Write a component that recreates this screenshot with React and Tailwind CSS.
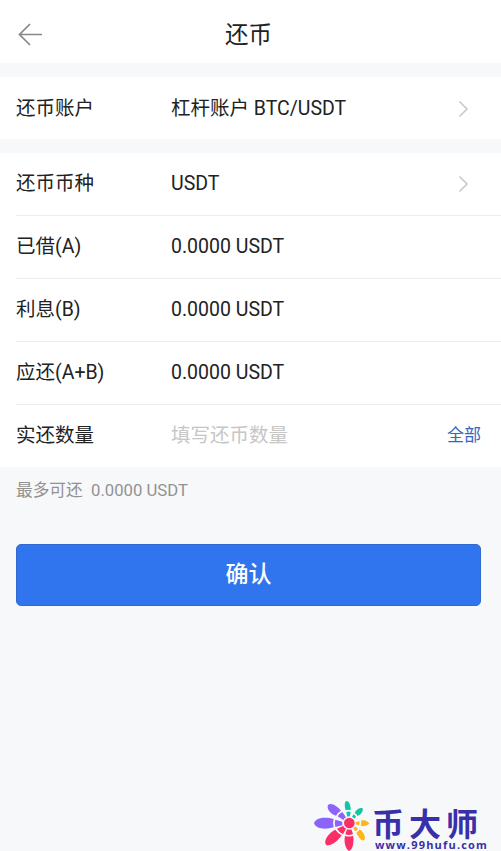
import React, { useState } from 'react';

const rows = [
  { label: '还币币种', value: 'USDT', arrow: true },
  { label: '已借(A)', value: '0.0000 USDT' },
  { label: '利息(B)', value: '0.0000 USDT' },
  { label: '应还(A+B)', value: '0.0000 USDT' },
];

const Chevron = () => (
  <svg className="ml-auto mr-8 h-[18px] w-[11px]" viewBox="0 0 11 18" fill="none" stroke="#c8c8c8" strokeWidth="1.6">
    <path d="M1.5 1.5 L9 9 L1.5 16.5" />
  </svg>
);

const Row = ({ label, value, arrow }) => (
  <div className="flex h-[63px] items-center border-b border-[#ececee]">
    <span className="w-[155px] shrink-0">{label}</span>
    <span>{value}</span>
    {arrow && <Chevron />}
  </div>
);

const Watermark = () => (
  <div className="absolute bottom-0 left-[310px] flex h-14 w-[191px] text-[#3730a8]">
    <svg className="h-14 w-[65px] shrink-0" viewBox="0 0 195 168">
      {/* outer petals */}
      <g fill="#8b65fa">
        <path d="M12 85 C18 66 48 66 71 72 Q67 85 71 97 C48 104 18 103 12 85 Z" />
        <path d="M54 30 C64 21 84 36 93 47 Q82 53 78 62 C65 59 48 43 54 30 Z" />
      </g>
      <g fill="#fb2e68">
        <path d="M76 104 Q84 116 95 121 C84 138 61 157 48 149 C39 136 57 113 76 104 Z" />
        <path d="M105 123 Q118 127 129 122 C133 139 129 164 117 168 C106 161 101 140 105 123 Z" />
      </g>
      <g fill="#0fc7a6">
        <path d="M106 20 C114 12 123 28 122 46 Q115 43 107 46 C104 36 103 26 106 20 Z" />
        <path d="M158 40 C161 51 150 61 142 63 Q140 56 134 54 C138 44 150 36 158 40 Z" />
      </g>
      <g fill="#fdb71a">
        <path d="M153 77 C164 74 174 79 178 86 C171 92 161 95 152 92 Q155 85 153 77 Z" />
        <path d="M149 103 C160 111 169 126 163 136 C153 139 144 123 139 113 Q146 110 149 103 Z" />
      </g>
      {/* inner petals */}
      <path d="M76 74 L97 80 L97 91 L76 96 Q72 85 76 74 Z M83 64 Q88 55 97 51 L109 68 L101 76 Z" fill="#8b65fa" />
      <path d="M109 51 Q115 48 122 51 L119 67 L112 67 Z M131 58 Q137 61 138 66 L130 74 L124 69 Z" fill="#0fc7a6" />
      <path d="M148 79 Q151 85 147 91 L134 87 L134 82 Z M144 101 Q141 106 136 109 L127 97 L132 91 Z" fill="#fdb71a" />
      <path d="M81 101 L100 92 L109 100 L99 118 Q88 113 81 101 Z M112 100 L123 100 L129 117 Q118 122 106 118 Z" fill="#fb2e68" />
      <circle cx="118" cy="84" r="20" fill="#f7f8fa" />
      <circle cx="118" cy="84" r="16" fill="#fb2e68" />
    </svg>
    <div className="-ml-[3px] pt-[10px]">
      <div className="h-[34px] whitespace-nowrap font-['Noto_Sans_CJK_SC',sans-serif] text-[32px] font-bold leading-[34px] tracking-[5px]">币大师</div>
      <div className="whitespace-nowrap pl-[3px] font-['Open_Sans',sans-serif] text-[11px] font-bold leading-[12px] tracking-[1.2px]">www.99hufu.com</div>
    </div>
  </div>
);

const App = () => {
  const [amount, setAmount] = useState('');

  return (
    <div className="relative h-[851px] w-[501px] overflow-hidden bg-[#f7f8fa] font-[Roboto,'Noto_Sans_CJK_SC',sans-serif] text-[19.5px] text-[#222222]">
      {/* Header */}
      <header className="grid h-[63px] grid-cols-[1fr_auto_1fr] items-center bg-white pt-[7px]">
        <svg className="ml-[18px] h-6 w-[25px]" viewBox="0 0 25 24" fill="none" stroke="#888888" strokeWidth="1.7">
          <path d="M24 11.5 H1.5 M12 1 L1.5 11.5 L12 22" />
        </svg>
        <h1 className="-translate-x-[2px] text-[23.5px] leading-8">还币</h1>
      </header>

      {/* Account */}
      <section className="mt-[14px] flex h-[62px] items-center bg-white pl-4 pt-px">
        <span className="w-[155px] shrink-0">还币账户</span>
        <span>杠杆账户 BTC/USDT</span>
        <Chevron />
      </section>

      {/* Repayment details */}
      <section className="mt-[14px] bg-white pl-4">
        {rows.map((row) => <Row key={row.label} {...row} />)}
        <div className="flex h-[62px] items-center pr-5">
          <span className="w-[155px] shrink-0">实还数量</span>
          <input type="text" placeholder="填写还币数量" className="min-w-0 flex-1 outline-none placeholder:text-[#c6c6c6]"
            value={amount} onChange={(e) => setAmount(e.target.value)} />
          <button className="text-[17px] text-[#3268bd]">全部</button>
        </div>
      </section>

      <p className="mt-3 whitespace-pre pl-4 text-[16.7px] leading-6 text-[#929292]">最多可还  0.0000 USDT</p>
      <button className="mx-4 mt-[41px] block h-[62px] w-[465px] rounded-[5px] border border-[#3069cf] bg-[#3075ee] text-[23px] font-medium text-white">确认</button>

      <Watermark />
    </div>
  );
};

export default App;
